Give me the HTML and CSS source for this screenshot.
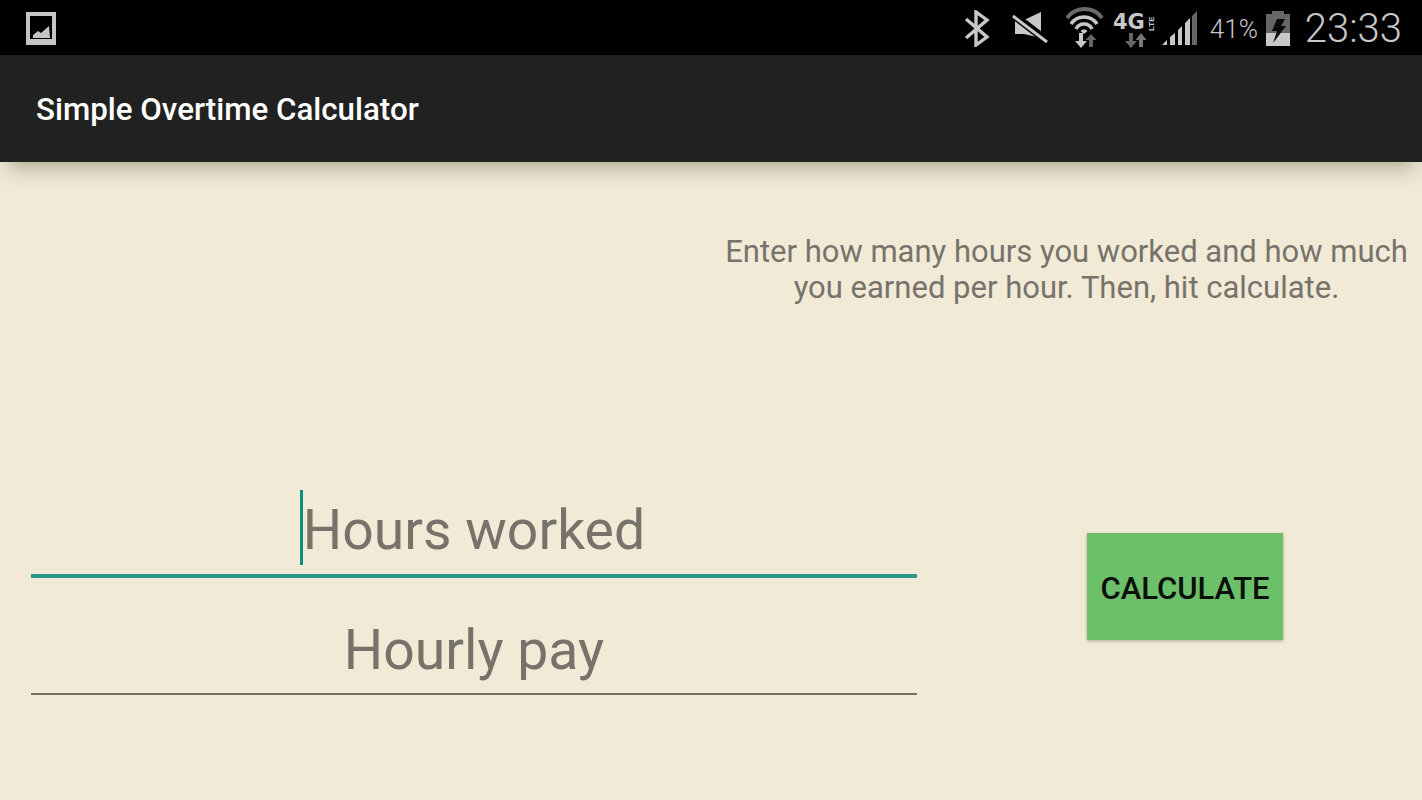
FILE: index.html
```html
<!DOCTYPE html>
<html lang="en">
<head>
<meta charset="utf-8">
<title>Simple Overtime Calculator</title>
<link rel="stylesheet" href="styles.css">
</head>
<body>
<div class="status">
  <svg class="ic-gallery" viewBox="0 0 30 33" width="30" height="33">
    <rect x="2" y="2" width="26" height="29" fill="none" stroke="#c4c4c4" stroke-width="4"/>
    <rect x="0" y="27" width="30" height="6" fill="#c4c4c4"/>
    <path d="M7 26 L7 23 L12 19 L15 21 L23 14 L24 26 Z" fill="#c4c4c4"/>
  </svg>
  <div class="status-right">
    <svg class="ic-bt" viewBox="0 0 26 37" width="26" height="37">
      <path d="M2 9 L23 27 L12 35 L12 2 L23 10 L2 28" fill="none" stroke="#c8c8c8" stroke-width="3.4"/>
    </svg>
    <svg class="ic-mute" viewBox="0 0 36 32" width="36" height="32">
      <path d="M3 8 L12 8 L29 0 L29 26 L12 22 L3 22 Z" fill="#c8c8c8"/>
      <path d="M0 2 L34 28" stroke="#000" stroke-width="8"/>
      <path d="M1 4 L35 30" stroke="#c8c8c8" stroke-width="3"/>
    </svg>
    <svg class="ic-wifi" viewBox="0 0 38 42" width="38" height="42">
      <path d="M1 11 A21.500 21.500 0 0 1 36 11" fill="none" stroke="#6a6a6a" stroke-width="4"/>
      <path d="M5 17 A15.600 15.600 0 0 1 31 17" fill="none" stroke="#c8c8c8" stroke-width="3.500"/>
      <path d="M10 22 A9 9 0 0 1 26 22" fill="none" stroke="#c8c8c8" stroke-width="3.500"/>
      <path d="M14.500 24 A5 5 0 0 1 21.500 24 L18 27 Z" fill="#c8c8c8"/>
      <path d="M13 26 L17 26 L17 34 L21 34 L15 41 L9 34 L13 34 Z" fill="#c8c8c8"/>
      <path d="M23 40 L23 33 L19.500 33 L25 27 L30.500 33 L27 33 L27 40 Z" fill="#666"/>
    </svg>
    <svg class="ic-net" viewBox="0 0 42 42" width="42" height="42">
      <text class="net-4g" x="0" y="22">4G</text>
      <text class="net-lte" transform="translate(41 24) rotate(-90)">LTE</text>
      <path d="M16 26 L20 26 L20 34 L24 34 L18 41 L12 34 L16 34 Z" fill="#666"/>
      <path d="M26 40 L26 33 L22.500 33 L28 26 L33.500 33 L30 33 L30 40 Z" fill="#777"/>
    </svg>
    <svg class="ic-signal" viewBox="0 0 36 36" width="36" height="36">
      <path d="M1 34 L6 29 L6 34 Z" fill="#c8c8c8"/>
      <path d="M9 34 L9 26 L14 22 L14 34 Z" fill="#c8c8c8"/>
      <path d="M17 34 L17 19 L21 15 L21 34 Z" fill="#c8c8c8"/>
      <path d="M24 34 L24 12 L29 7 L29 34 Z" fill="#c8c8c8"/>
      <path d="M31 34 L31 5 L36 0 L36 34 Z" fill="#666"/>
    </svg>
    <span class="pct">41%</span>
    <svg class="ic-batt" viewBox="0 0 24 35" width="24" height="35">
      <rect x="6" y="0" width="12" height="4" fill="#666"/>
      <rect x="0" y="3" width="24" height="19" fill="#666"/>
      <rect x="0" y="22" width="24" height="13" fill="#c8c8c8"/>
      <path d="M11 8 L19 8 L15 15 L20 15 L7 32 L11 20 L6 20 Z" fill="#0a0a0a"/>
    </svg>
    <span class="clock">23:33</span>
  </div>
</div>
<header class="appbar">Simple Overtime Calculator</header>
<main class="content">
  <div class="hint-row">
    <p class="hint">Enter how many hours you worked and how much you earned per hour. Then, hit calculate.</p>
  </div>
  <div class="form-row">
    <div class="fields">
      <div class="field field-active"><span class="placeholder"><i class="caret"></i>Hours worked</span></div>
      <div class="field field-plain"><span class="placeholder">Hourly pay</span></div>
    </div>
    <button class="calc" type="button">CALCULATE</button>
  </div>
</main>
</body>
</html>
```
FILE: styles.css
```css
* { box-sizing: border-box; }
html, body { margin: 0; height: 100%; }
body {
  width: 1422px;
  height: 800px;
  overflow: hidden;
  background: #f1ead7;
  font-family: Roboto, "Liberation Sans", sans-serif;
  display: flex;
  flex-direction: column;
}
.status {
  height: 55px;
  flex: none;
  background: #000;
  display: flex;
  align-items: center;
  padding-left: 26px;
  color: #c8c8c8;
}
.ic-gallery { margin-top: 1px; }
.status-right {
  margin-left: auto;
  display: flex;
  align-items: center;
  padding-right: 20px;
}
.status-right svg { flex: none; display: block; }
.ic-bt { margin-top: 2px; }
.ic-mute { margin-left: 22px; margin-top: 0; }
.ic-wifi { margin-left: 18px; }
.ic-net { margin-left: 9px; }
.ic-signal { margin-left: 6px; margin-top: 3px; }
.net-4g { font: 700 21px "DejaVu Sans", sans-serif; fill: #c8c8c8; }
.net-lte { font: 700 8px "Liberation Sans", sans-serif; fill: #c8c8c8; }
.pct {
  margin-left: 13px;
  font-size: 26px;
  font-weight: 300;
  width: 48px;
  white-space: nowrap;
  margin-top: 2px;
}
.ic-batt { margin-left: 8px; margin-top: 2px; }
.clock {
  margin-left: 15px;
  font-size: 40px;
  font-weight: 300;
  white-space: nowrap;
  margin-top: 2px;
}
.appbar {
  height: 107px;
  flex: none;
  background: #212121;
  color: #fff;
  font-size: 31.3px;
  font-weight: 500;
  display: flex;
  align-items: center;
  padding: 2px 0 0 36px;
  position: relative;
  box-shadow: 0 14px 20px -8px rgba(85, 80, 55, 0.42);
}
.content { flex: 1; display: flex; flex-direction: column; }
.hint-row { display: flex; justify-content: flex-end; padding: 72px 14px 0 0; }
.hint {
  margin: 0;
  width: 683px;
  text-align: center;
  font-size: 31px;
  line-height: 36px;
  color: #77736a;
}
.form-row {
  display: flex;
  align-items: flex-start;
  padding-left: 31px;
  margin-top: 154px;
}
.fields { width: 886px; display: flex; flex-direction: column; }
.field {
  display: flex;
  justify-content: center;
  align-items: flex-end;
  font-size: 55.3px;
  line-height: 80px;
  color: #77736a;
}
.field-plain { height: 117px; border-bottom: 2px solid #77705f; padding-bottom: 2px; }
.field-active { height: 118px; border-bottom: 4px solid #2a9a88; padding-bottom: 3px; }
.placeholder { position: relative; white-space: nowrap; }
.caret {
  position: absolute;
  left: -3px;
  top: -1px;
  width: 3px;
  height: 75px;
  background: #0e8f7c;
}
.calc {
  width: 196px;
  height: 107px;
  margin: 73px 0 0 170px;
  border: 0;
  padding: 3px 0 0;
  background: #6cc069;
  color: #0a0f0a;
  font-family: inherit;
  font-size: 31px;
  font-weight: 500;
  box-shadow: 0 1px 3px rgba(90, 85, 70, 0.45);
}
```
